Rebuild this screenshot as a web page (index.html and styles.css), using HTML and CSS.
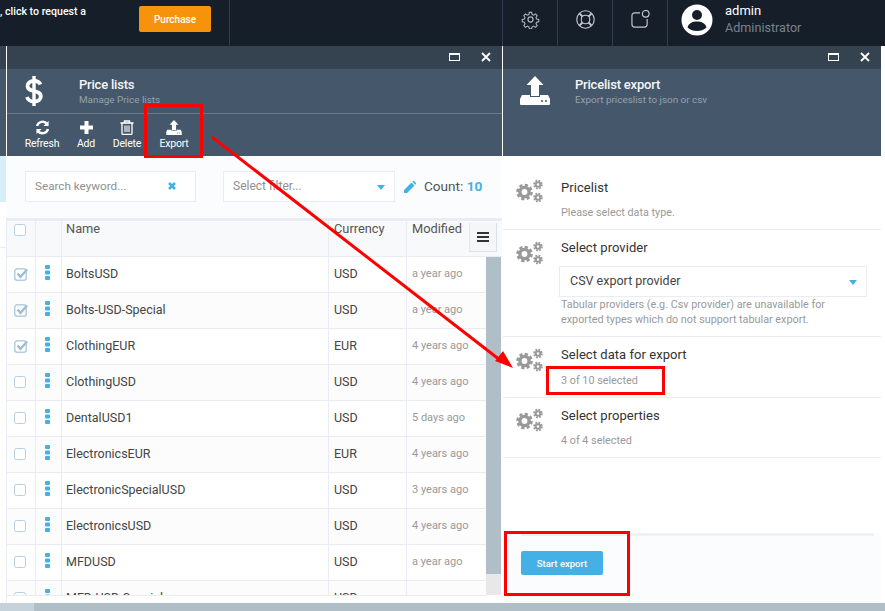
FILE: index.html
```html
<!DOCTYPE html>
<html lang="en">
<head>
<meta charset="utf-8">
<title>Price lists</title>
<link rel="stylesheet" href="styles.css">
</head>
<body>
<svg class="defs" width="0" height="0">
  <defs>
    <symbol id="gears" viewBox="0 0 28 28">
      <circle cx="8.500" cy="15" r="4.600" fill="none" stroke="#999" stroke-width="3.400"/>
      <circle cx="8.500" cy="15" r="7" fill="none" stroke="#999" stroke-width="2.600" stroke-dasharray="3.200 2.300"/>
      <circle cx="22" cy="7.500" r="2.300" fill="none" stroke="#999" stroke-width="2"/>
      <circle cx="22" cy="7.500" r="3.900" fill="none" stroke="#999" stroke-width="1.800" stroke-dasharray="1.800 1.260"/>
      <circle cx="22" cy="20.500" r="2.300" fill="none" stroke="#999" stroke-width="2"/>
      <circle cx="22" cy="20.500" r="3.900" fill="none" stroke="#999" stroke-width="1.800" stroke-dasharray="1.800 1.260"/>
    </symbol>
    <symbol id="upload" viewBox="0 0 30 29">
      <path fill="#fff" d="M15 0 23.500 9H19V20H11V9H6.500Z"/>
      <path fill="#fff" d="M2 19H10V21H20V19H28L30 23V28Q30 29 29 29H1Q0 29 0 28V23Z"/>
      <circle cx="22" cy="25" r="1" fill="#45576b"/>
      <circle cx="26" cy="25" r="1" fill="#45576b"/>
    </symbol>
    <symbol id="check-on" viewBox="0 0 14 14">
      <rect x="0.750" y="1.750" width="11.500" height="11.500" rx="2.500" fill="none" stroke="#b3cfe0" stroke-width="1.500"/>
      <path d="M3.500 6.500 6.500 10 13 2.500" fill="none" stroke="#9fbdd0" stroke-width="2.400"/>
    </symbol>
    <symbol id="dots" viewBox="0 0 5 15">
      <rect width="5" height="4" y="0" rx="1" fill="#43b0e6"/>
      <rect width="5" height="4" y="5.500" rx="1" fill="#43b0e6"/>
      <rect width="5" height="4" y="11" rx="1" fill="#43b0e6"/>
    </symbol>
    <symbol id="win-max" viewBox="0 0 11 8">
      <rect x="0.500" y="0.500" width="10" height="7" fill="none" stroke="#fff"/>
      <rect x="0" y="0" width="11" height="2" fill="#fff"/>
    </symbol>
    <symbol id="win-close" viewBox="0 0 10 10">
      <path d="M1 1 9 9M9 1 1 9" stroke="#fff" stroke-width="1.800" fill="none"/>
    </symbol>
  </defs>
</svg>

<header class="topbar">
  <div class="notice">
    <span class="notice-text">, click to request a</span>
    <button class="purchase">Purchase</button>
  </div>
  <div class="top-spacer"></div>
  <div class="top-icon">
    <svg width="19" height="19" viewBox="0 0 24 24" fill="none" stroke="#aeb6bf" stroke-width="1.500"><circle cx="12" cy="12" r="3.200"/><path d="M10.300 2h3.400l.6 3 2.100.9 2.600-1.700 2.400 2.400-1.700 2.600.9 2.100 3 .6v3.400l-3 .6-.9 2.100 1.700 2.600-2.400 2.400-2.600-1.700-2.100.9-.6 3h-3.400l-.6-3-2.100-.9-2.600 1.700-2.400-2.400 1.700-2.600-.9-2.100-3-.6v-3.400l3-.6.9-2.100-1.700-2.600 2.400-2.400 2.600 1.700 2.100-.9z" transform="translate(1.200 1.200) scale(.9)"/></svg>
  </div>
  <div class="top-icon">
    <svg width="19" height="19" viewBox="0 0 20 20" fill="none" stroke="#c3c9cf" stroke-width="1.200"><circle cx="10" cy="10" r="9.200"/><circle cx="10" cy="10" r="4.500"/><path d="M3.500 3.500 6.800 6.800M16.500 3.500 13.200 6.800M3.500 16.500 6.800 13.200M16.500 16.500 13.200 13.200" stroke-width="2"/></svg>
  </div>
  <div class="top-icon">
    <svg width="19" height="19" viewBox="0 0 20 20" fill="none" stroke="#c3c9cf" stroke-width="1.200"><path d="M9.500 3H4Q1 3 1 6V15Q1 18 4 18H14Q17 18 17 15V9.500"/><circle cx="15.500" cy="4" r="3.500"/></svg>
  </div>
  <div class="user">
    <svg class="avatar" width="32" height="32" viewBox="0 0 32 32"><circle cx="16" cy="16" r="15.500" fill="#fff"/><circle cx="16" cy="11" r="5" fill="#161e29"/><path d="M6.500 23.500C8 18.500 12 17.500 16 17.500S24 18.500 25.500 23.500C23 26 19.500 27 16 27S9 26 6.500 23.500Z" fill="#161e29"/></svg>
    <div class="user-text">
      <div class="user-name">admin</div>
      <div class="user-role">Administrator</div>
    </div>
  </div>
</header>

<main class="workspace">
  <div class="under-blade">
    <div class="under-dark"></div>
    <div class="under-head"></div>
    <div class="under-blue"></div>
    <div class="under-rest"></div>
  </div>

  <section class="blade blade-list">
    <div class="blade-controls">
      <svg class="ctl" width="11" height="8"><use href="#win-max"/></svg>
      <svg class="ctl" width="10" height="10"><use href="#win-close"/></svg>
    </div>
    <div class="blade-head">
      <div class="head-main">
        <svg class="dollar" width="18" height="32" viewBox="0 0 18 32"><path fill="none" stroke="#fff" stroke-width="3.800" d="M15.500 9.500C14.500 7 12 6 9 6 5 6 2.500 8 2.500 11 2.500 18 15.800 14 15.800 21.500 15.800 24.500 13 26.500 9 26.500 5.500 26.500 3 25 2 22"/><path stroke="#fff" stroke-width="3.400" d="M9 1V31"/></svg>
        <div class="head-text">
          <div class="title">Price lists</div>
          <div class="subtitle">Manage Price lists</div>
        </div>
      </div>
      <div class="toolbar">
        <div class="tool tool-refresh">
          <svg width="15" height="15" viewBox="0 0 16 16" fill="none" stroke="#fff" stroke-width="2.600"><path d="M2.200 6.500A6 6 0 0 1 13 4.500"/><path d="M13.800 9.500A6 6 0 0 1 3 11.500"/><path d="M14.500 1V6.500H9Z" fill="#fff" stroke="none"/><path d="M1.500 15V9.500H7Z" fill="#fff" stroke="none"/></svg>
          <span>Refresh</span>
        </div>
        <div class="tool tool-add">
          <svg width="15" height="15" viewBox="0 0 15 15"><path fill="#fff" d="M5.500 1H9.500V5.500H14V9.500H9.500V14H5.500V9.500H1V5.500H5.500Z"/></svg>
          <span>Add</span>
        </div>
        <div class="tool tool-delete">
          <svg width="14" height="15" viewBox="0 0 14 15" fill="none" stroke="#fff" stroke-width="1.300"><path d="M.500 3H13.500" stroke-width="1.600"/><path d="M4.500 3V1H9.500V3"/><path d="M2 3V13.500Q2 14.400 3 14.400H11Q12 14.400 12 13.500V3"/><path d="M5 5.500V12M7 5.500V12M9 5.500V12" stroke-width="1.100"/></svg>
          <span>Delete</span>
        </div>
        <div class="tool tool-export">
          <svg width="16" height="15"><use href="#upload"/></svg>
          <span>Export</span>
        </div>
      </div>
    </div>

    <div class="filters">
      <div class="field field-search">
        <span class="placeholder">Search keyword...</span>
        <svg class="clear" width="8" height="8" viewBox="0 0 8 8"><path d="M1 1 7 7M7 1 1 7" stroke="#43b0e6" stroke-width="2.600"/></svg>
      </div>
      <div class="field field-select">
        <span class="placeholder">Select filter...</span>
        <span class="caret"></span>
      </div>
      <svg class="pencil" width="12" height="12" viewBox="0 0 12 12"><path fill="#43b0e6" d="M0 12V9L7.500 1.500 10.500 4.500 3 12ZM8.300.7 9 0Q9.500-.3 10 0L12 2Q12.300 2.500 12 3L11.300 3.700Z"/></svg>
      <span class="count">Count: <b>10</b></span>
    </div>

    <div class="grid">
      <div class="grid-head">
        <div class="c c-check"><span class="box"></span></div>
        <div class="c c-dots"></div>
        <div class="c c-name">Name</div>
        <div class="c c-cur">Currency</div>
        <div class="c c-mod">Modified</div>
        <div class="menu-btn"><i></i><i></i><i></i></div>
      </div>
      <div class="grid-body">
        <div class="rows">
          <div class="row"><div class="c c-check"><svg width="14" height="14"><use href="#check-on"/></svg></div><div class="c c-dots"><svg width="5" height="15"><use href="#dots"/></svg></div><div class="c c-name">BoltsUSD</div><div class="c c-cur">USD</div><div class="c c-mod">a year ago</div></div>
          <div class="row"><div class="c c-check"><svg width="14" height="14"><use href="#check-on"/></svg></div><div class="c c-dots"><svg width="5" height="15"><use href="#dots"/></svg></div><div class="c c-name">Bolts-USD-Special</div><div class="c c-cur">USD</div><div class="c c-mod">a year ago</div></div>
          <div class="row"><div class="c c-check"><svg width="14" height="14"><use href="#check-on"/></svg></div><div class="c c-dots"><svg width="5" height="15"><use href="#dots"/></svg></div><div class="c c-name">ClothingEUR</div><div class="c c-cur">EUR</div><div class="c c-mod">4 years ago</div></div>
          <div class="row"><div class="c c-check"><span class="box"></span></div><div class="c c-dots"><svg width="5" height="15"><use href="#dots"/></svg></div><div class="c c-name">ClothingUSD</div><div class="c c-cur">USD</div><div class="c c-mod">4 years ago</div></div>
          <div class="row"><div class="c c-check"><span class="box"></span></div><div class="c c-dots"><svg width="5" height="15"><use href="#dots"/></svg></div><div class="c c-name">DentalUSD1</div><div class="c c-cur">USD</div><div class="c c-mod">5 days ago</div></div>
          <div class="row"><div class="c c-check"><span class="box"></span></div><div class="c c-dots"><svg width="5" height="15"><use href="#dots"/></svg></div><div class="c c-name">ElectronicsEUR</div><div class="c c-cur">EUR</div><div class="c c-mod">4 years ago</div></div>
          <div class="row"><div class="c c-check"><span class="box"></span></div><div class="c c-dots"><svg width="5" height="15"><use href="#dots"/></svg></div><div class="c c-name">ElectronicSpecialUSD</div><div class="c c-cur">USD</div><div class="c c-mod">3 years ago</div></div>
          <div class="row"><div class="c c-check"><span class="box"></span></div><div class="c c-dots"><svg width="5" height="15"><use href="#dots"/></svg></div><div class="c c-name">ElectronicsUSD</div><div class="c c-cur">USD</div><div class="c c-mod">4 years ago</div></div>
          <div class="row"><div class="c c-check"><span class="box"></span></div><div class="c c-dots"><svg width="5" height="15"><use href="#dots"/></svg></div><div class="c c-name">MFDUSD</div><div class="c c-cur">USD</div><div class="c c-mod">a year ago</div></div>
          <div class="row"><div class="c c-check"><span class="box"></span></div><div class="c c-dots"><svg width="5" height="15"><use href="#dots"/></svg></div><div class="c c-name">MFD-USD-Special</div><div class="c c-cur">USD</div><div class="c c-mod">a year ago</div></div>
        </div>
        <div class="vscroll"><div class="vthumb"></div></div>
      </div>
    </div>
  </section>

  <section class="blade blade-export">
    <div class="blade-controls">
      <svg class="ctl" width="11" height="8"><use href="#win-max"/></svg>
      <svg class="ctl" width="10" height="10"><use href="#win-close"/></svg>
    </div>
    <div class="blade-head">
      <div class="head-main head-export">
        <svg class="upload-big" width="30" height="29"><use href="#upload"/></svg>
        <div class="head-text">
          <div class="title">Pricelist export</div>
          <div class="subtitle">Export priceslist to json or csv</div>
        </div>
      </div>
    </div>
    <div class="export-body">
      <div class="step step-a">
        <svg class="gears" width="28" height="28"><use href="#gears"/></svg>
        <div class="step-text">
          <div class="step-title">Pricelist</div>
          <div class="step-note note-gap">Please select data type.</div>
        </div>
      </div>
      <div class="step step-b">
        <svg class="gears" width="28" height="28"><use href="#gears"/></svg>
        <div class="step-text">
          <div class="step-title">Select provider</div>
          <div class="provider"><span>CSV export provider</span><span class="caret"></span></div>
          <div class="step-note">Tabular providers (e.g. Csv provider) are unavailable for<br>exported types which do not support tabular export.</div>
        </div>
      </div>
      <div class="step step-c">
        <svg class="gears" width="28" height="28"><use href="#gears"/></svg>
        <div class="step-text">
          <div class="step-title">Select data for export</div>
          <div class="step-note note-gap">3 of 10 selected</div>
        </div>
      </div>
      <div class="step step-d">
        <svg class="gears" width="28" height="28"><use href="#gears"/></svg>
        <div class="step-text">
          <div class="step-title">Select properties</div>
          <div class="step-note note-gap">4 of 4 selected</div>
        </div>
      </div>
    </div>
    <div class="export-foot">
      <button class="start">Start export</button>
    </div>
  </section>
</main>

<div class="hscroll"><div class="hthumb"></div></div>

<div class="mark mark-export"></div>
<div class="mark mark-data"></div>
<div class="mark mark-start"></div>
<svg class="arrow" width="885" height="611" viewBox="0 0 885 611">
  <path d="M212 137 500 360" stroke="#f00" stroke-width="3" fill="none"/>
  <path d="M513 368 495 361 503 351Z" fill="#f00"/>
</svg>
</body>
</html>
```

FILE: styles.css
```css
* { box-sizing: border-box; }
html, body { margin: 0; padding: 0; }
body {
  position: relative;
  width: 885px;
  height: 611px;
  overflow: hidden;
  background: #fff;
  font-family: Roboto, "Liberation Sans", sans-serif;
  color: #333;
}
.defs { position: absolute; }

/* top bar */
.topbar { display: flex; height: 46px; background: #161e29; color: #fff; }
.notice {
  width: 230px;
  display: flex;
  border-right: 1px solid #2f3d4e;
}
.notice-text { font-size: 10.600px; font-weight: 500; line-height: 14px; margin-top: 5px; width: 139px; white-space: nowrap; }
.purchase {
  width: 72px; height: 26px; margin-top: 6px;
  background: #f7930a; color: #fff; border: 0; border-radius: 2px;
  font: 500 10px Roboto, sans-serif;
}
.top-spacer { width: 272px; }
.top-icon {
  width: 55px; display: flex; align-items: center; justify-content: center;
  border-left: 1px solid #2f3d4e; padding-bottom: 7px;
}
.top-icon:first-of-type { border-left: 0; }
.user { display: flex; border-left: 1px solid #2f3d4e; flex: 1; padding: 4px 0 0 13px; gap: 12px; }
.avatar { display: block; }
.user-name { font-size: 13px; line-height: 14px; color: #fff; }
.user-role { font-size: 12.600px; line-height: 15px; color: #75838f; margin-top: 2px; }

/* workspace */
.workspace { display: flex; height: 557px; background: #fff; }
.under-blade { width: 6px; display: flex; flex-direction: column; }
.under-dark { height: 23px; background: #35424f; }
.under-head { height: 87px; background: #45576b; }
.under-blue { height: 46px; background: #d7edf9; }
.under-rest { height: 46px; border-bottom: 1px solid #e9edf3; }
.blade {
  display: flex; flex-direction: column; background: #fbfcfe;
  height: 557px;
}
.blade-list { width: 495px; margin-left: 1px; }
.blade-export { width: 379px; border-left: 1px solid #fff; }
.blade-controls {
  height: 23px; background: #35424f; display: flex; justify-content: flex-end;
  align-items: center; gap: 21px; padding: 0 11px 2px 0;
}
.ctl { display: block; }
.blade-head { height: 87px; background: #45576b; }
.head-main { display: flex; height: 45px; padding: 6px 0 0 18px; border-bottom: 1px solid #6a7887; }
.dollar { margin-right: 36px; }
.head-text { padding-top: 2px; }
.title { font-size: 13px; font-weight: 500; line-height: 16px; color: #f4f5f6; letter-spacing: -.2px; }
.subtitle { font-size: 9.900px; line-height: 12px; color: #97a2ad; margin-top: 1px; }
.head-export { border-bottom: 0; padding-left: 17px; height: 87px; }
.upload-big { margin-right: 25px; margin-top: 1px; display: block; }
.toolbar { display: flex; height: 42px; padding-left: 17px; }
.tool {
  display: flex; flex-direction: column; align-items: center; color: #fff;
  font-size: 10.500px; line-height: 13px; padding-top: 6px; letter-spacing: -.2px;
}
.tool svg { display: block; margin-bottom: 2px; }
.tool-refresh { width: 36px; }
.tool-add { width: 52px; }
.tool-delete { width: 30px; }
.tool-export { width: 64px; }

/* filters */
.filters { height: 62px; display: flex; align-items: center; padding: 0 0 1px 18px; }
.field {
  height: 31px; background: #fff; border: 1px solid #e9edf3; display: flex; align-items: center;
  font-size: 12px; padding-bottom: 2px;
}
.placeholder { color: #8f8f8f; }
.field-search { width: 171px; padding-left: 9px; margin-right: 27px; position: relative; font-size: 11.700px; }
.clear { position: absolute; left: 142px; top: 10px; }
.field-select { width: 172px; padding-left: 9px; position: relative; margin-right: 9px; }
.caret {
  position: absolute; right: 9px; top: 13px; width: 0; height: 0;
  border-left: 4px solid transparent; border-right: 4px solid transparent; border-top: 5px solid #43b0e6;
}
.pencil { margin-right: 8px; }
.count { font-size: 13.600px; color: #555; margin-top: -2px; }
.count b { color: #43b0e6; font-weight: 700; }

/* grid */
.grid {
  display: flex; flex-direction: column; height: 385px; border-top: 3px solid #e9edf3;
  margin-left: -1px; border-left: 1px solid #e9edf3;
}
.grid-head {
  display: flex; height: 36px; background: #f8f9fa; border-bottom: 1px solid #e9edf3;
  font-size: 12.800px; color: #555; position: relative; flex: none;
}
.c { border-right: 1px solid #e9edf3; display: flex; flex: none; }
.grid-head .c { align-items: flex-start; padding-top: 1px; line-height: 14px; }
.c-check { width: 29px; padding-left: 7px; }
.c-dots { width: 26px; padding-left: 9px; }
.c-name { width: 267px; padding-left: 4px; }
.c-cur { width: 78px; padding-left: 5px; }
.c-mod { width: 79px; padding-left: 5px; border-right: 0; }
.box {
  display: block; width: 12px; height: 12px; border: 1.500px solid #b3cfe0; border-radius: 2.500px; background: #fff;
}
.grid-head .c-check { padding-top: 3px; }
.menu-btn {
  position: absolute; left: 462px; top: 2px; width: 28px; height: 29px;
  background: #f5f6f7; border-right: 1px solid #dcdfe3; border-bottom: 1px solid #dcdfe3; border-left: 1px solid #e5e7ea;
  display: flex; flex-direction: column; justify-content: center; align-items: center; gap: 2px;
}
.menu-btn i { display: block; width: 12px; height: 2px; background: #333; }
.grid-body { display: flex; height: 346px; overflow: hidden; background: #fff; position: relative; }
.rows { width: 479px; height: 339px; overflow: hidden; flex: none; border-bottom: 1px solid #e9edf3; }
.row {
  display: flex; height: 36px; border-bottom: 1px solid #e9edf3; font-size: 12.500px; color: #444; background: #fff;
}
.row:nth-child(even) { background: #fcfcfc; }
.row .c { align-items: center; padding-bottom: 2px; }
.row .c-check svg, .row .c-dots svg { display: block; }
.row .c-check svg { margin-top: 1px; }
.row .c-dots { align-items: flex-start; padding-top: 8px; }
.row .c-name { color: #444; }
.row .c-mod { color: #999; font-size: 11px; }
.vscroll { width: 15px; height: 338px; background: #e8e8e8; flex: none; }
.vthumb { height: 317px; background: #b0bec7; }

/* export blade */
.export-body { height: 377px; display: flex; flex-direction: column; padding-top: 10px; background: #fff; flex: none; }
.step { display: flex; border-bottom: 1px solid #e9edf3; padding-left: 13px; background: #fff; }
.gears { flex: none; margin-right: 17px; display: block; }
.step-a { height: 64px; padding-top: 11px; }
.step-b { height: 107px; padding-top: 9px; }
.step-c { height: 61px; padding-top: 9px; }
.step-d { height: 60px; padding-top: 8px; }
.step-title { font-size: 13px; line-height: 16px; color: #333; letter-spacing: .05px; }
.step-a .step-title { margin-top: 3px; }
.step-b .step-title { margin-top: 1px; }
.step-c .step-title { margin-top: 1px; }
.step-d .step-title { margin-top: 2px; }
.step-note { font-size: 10.800px; line-height: 15px; color: #999; }
.note-gap { margin-top: 9px; }
.step-c .note-gap { margin-top: 10px; }
.provider {
  position: relative; width: 308px; height: 31px; margin: 10px 0 0 -2px; padding: 0 0 2px 10px;
  border: 1px solid #e9edf3; background: #fff; display: flex; align-items: center; font-size: 12.500px; color: #444;
}
.export-foot {
  flex: 1; margin: 0 7px 0 18px; border-top: 3px solid #eef1f6; padding-top: 15px; background: #fbfcfe;
}
.start {
  display: block; width: 82px; height: 24px; background: #43b0e6; color: #fff; border: 0; border-radius: 2px;
  font: 500 9.500px Roboto, sans-serif;
}

/* bottom scrollbar */
.hscroll { height: 8px; background: #b0bec7; }
.hthumb { width: 34px; height: 8px; background: #c5d2dc; }

/* annotations */
.mark { position: absolute; border: 3px solid #f00; }
.mark-export { left: 144px; top: 104px; width: 59px; height: 54px; }
.mark-data { left: 546px; top: 366px; width: 119px; height: 29px; }
.mark-start { left: 504px; top: 531px; width: 126px; height: 65px; }
.arrow { position: absolute; left: 0; top: 0; pointer-events: none; }
```
